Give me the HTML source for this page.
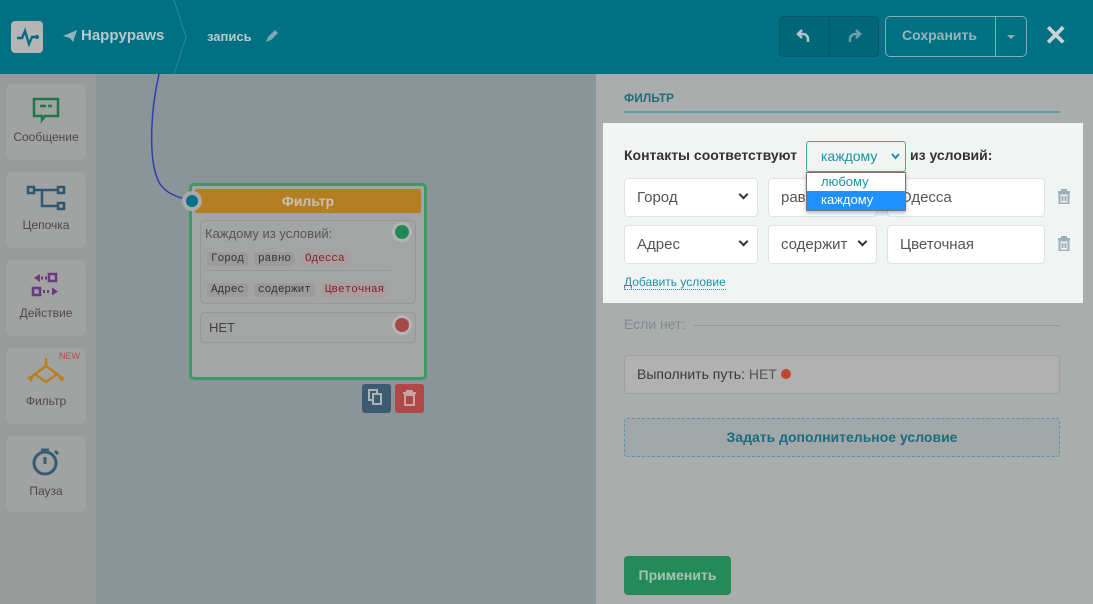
<!DOCTYPE html>
<html><head><meta charset="utf-8"><style>
*{box-sizing:border-box;margin:0;padding:0}
body{width:1093px;height:604px;overflow:hidden;position:relative;font-family:"Liberation Sans",sans-serif;background:#8b9497}
.a{position:absolute}
.hdr{left:0;top:0;width:1093px;height:74px;background:#007083}
.side{left:0;top:74px;width:96px;height:530px;background:#999b9b}
.card{left:6px;width:80px;background:#a1a2a2;border-radius:6px;text-align:center;font-size:12px;color:#4a4a4a}
.panel{left:596px;top:74px;width:497px;height:530px;background:#abadac}
.box{left:603px;top:123px;width:480px;height:180px;background:#f2f4f4}
.inp{background:#fff;border:1px solid #dde3e3;border-radius:4px;height:39px;font-size:15px;color:#555;padding:10px 12px}
.chev{position:absolute;right:10px;top:12px;width:7px;height:7px;border-right:2px solid #333;border-bottom:2px solid #333;transform:rotate(45deg)}
.tag{display:inline-block;background:#9b9b9b;border-radius:3px;padding:1px 4px;font-family:"Liberation Mono",monospace;font-size:11px;color:#333;margin-right:6px}
</style></head><body>
<div class="a hdr"></div>
<div class="a" style="left:11px;top:21px;width:32px;height:32px;background:#b5b5b5;border-radius:4px"></div>
<svg class="a" style="left:11px;top:21px" width="32" height="32"><path d="M6 17h5l3-7 4 13 3-7h4" stroke="#006f84" stroke-width="2.4" fill="none"/><circle cx="26" cy="16" r="2" fill="#006f84"/></svg>
<svg class="a" style="left:63px;top:30px" width="14" height="12"><path d="M0 6L14 0 10 12 7 8z" fill="#8fb6bd"/></svg>
<div class="a" style="left:81px;top:27px;color:#b8c9cc;font-weight:bold;font-size:15px">Happypaws</div>
<svg class="a" style="left:170px;top:0" width="20" height="74"><path d="M4 0L16 37 4 74" stroke="#2d8b9b" fill="none"/></svg>
<div class="a" style="left:207px;top:29px;color:#b8c9cc;font-weight:bold;font-size:13px">запись</div>
<svg class="a" style="left:264px;top:30px" width="14" height="14"><path d="M2 12l2-5 7-7 3 3-7 7z" fill="#7fa9b1"/></svg>
<div class="a" style="left:779px;top:16px;width:100px;height:41px;border:1px solid #00596a;border-radius:5px;background:#006678"></div>
<div class="a" style="left:829px;top:17px;width:1px;height:39px;background:#00596a"></div>
<svg class="a" style="left:796px;top:28px" width="16" height="16"><path d="M6 2L2 6l4 4" stroke="#b5c5c8" stroke-width="2.5" fill="none"/><path d="M2 6h5a5 5 0 0 1 5 5v3" stroke="#b5c5c8" stroke-width="2.5" fill="none"/></svg>
<svg class="a" style="left:846px;top:28px" width="16" height="16"><path d="M10 2l4 4-4 4" stroke="#6f9fa8" stroke-width="2.5" fill="none"/><path d="M14 6H9a5 5 0 0 0-5 5v3" stroke="#6f9fa8" stroke-width="2.5" fill="none"/></svg>
<div class="a" style="left:885px;top:16px;width:142px;height:41px;border:1px solid #86aeb5;border-radius:5px"></div>
<div class="a" style="left:995px;top:17px;width:1px;height:39px;background:#86aeb5"></div>
<div class="a" style="left:902px;top:27px;color:#9ab5ba;font-size:14px;font-weight:bold">Сохранить</div>
<div class="a" style="left:1007px;top:35px;border:4px solid transparent;border-top-color:#8fb0b6"></div>
<div class="a" style="left:1044px;top:19px;color:#c8d3d5;font-size:28px;font-weight:bold">✕</div>

<div class="a side"></div>
<div class="a card" style="top:84px;height:76px"><svg style="margin-top:12px" width="30" height="28"><path d="M3 3h24v17H14l-3 4v-4H3z" stroke="#1d7a48" stroke-width="2.5" fill="none"/><path d="M9 10h6M17 10h4" stroke="#1d7a48" stroke-width="2.5"/></svg><div style="margin-top:3px">Сообщение</div></div>
<div class="a card" style="top:172px;height:76px"><svg style="margin-top:12px" width="40" height="28"><rect x="2" y="3" width="6" height="6" stroke="#2f5770" stroke-width="2.5" fill="none"/><rect x="32" y="3" width="6" height="6" stroke="#2f5770" stroke-width="2.5" fill="none"/><rect x="32" y="19" width="6" height="6" stroke="#2f5770" stroke-width="2.5" fill="none"/><path d="M8 6h24M16 6v16h16" stroke="#2f5770" stroke-width="2.5" fill="none"/></svg><div style="margin-top:3px">Цепочка</div></div>
<div class="a card" style="top:260px;height:76px"><svg style="margin-top:12px" width="30" height="28"><path d="M3 6l6-4v8z" fill="#6a3a80"/><path d="M10 6h2M14 6h2" stroke="#6a3a80" stroke-width="3"/><rect x="18" y="2" width="7" height="7" stroke="#6a3a80" stroke-width="2.5" fill="none"/><rect x="2" y="16" width="7" height="7" stroke="#6a3a80" stroke-width="2.5" fill="none"/><path d="M12 19.5h2M16 19.5h2" stroke="#6a3a80" stroke-width="3"/><path d="M21 15.5l6 4-6 4z" fill="#6a3a80"/></svg><div style="margin-top:3px">Действие</div></div>
<div class="a card" style="top:348px;height:76px"><div style="position:absolute;right:6px;top:3px;color:#b34a4a;font-size:9px">NEW</div><svg style="margin-top:8px" width="40" height="32"><path d="M20 2v8L9 18l11 8 11-8-11-8M9 18l-5 4M31 18l5 4" stroke="#b9801f" stroke-width="2.5" fill="none"/><path d="M1 21h7l-3 5zM32 21h7l-3 5z" fill="#b9801f"/></svg><div style="margin-top:3px">Фильтр</div></div>
<div class="a card" style="top:436px;height:76px"><svg style="margin-top:10px" width="30" height="32"><circle cx="14" cy="17" r="11" stroke="#355c70" stroke-width="3" fill="none"/><path d="M14 11v7M10 4h8M24 5l3 3" stroke="#355c70" stroke-width="3"/></svg><div style="margin-top:3px">Пауза</div></div>

<svg class="a" style="left:140px;top:74px" width="60" height="130"><path d="M19 0C10 40 8 90 20 110Q28 122 50 126" stroke="#2b3fb5" stroke-width="1.5" fill="none"/></svg>
<div class="a" style="left:189px;top:183px;width:238px;height:197px;border:3px solid #3d9865;border-radius:5px;background:#a3a5a5"></div>
<div class="a" style="left:195px;top:189px;width:226px;height:24px;background:#b47e23;border-radius:2px;color:#c8c1b3;font-weight:bold;font-size:14px;text-align:center;line-height:24px">Фильтр</div>
<div class="a" style="left:182px;top:191px;width:20px;height:20px;border-radius:50%;background:#aaa;"></div>
<div class="a" style="left:186px;top:195px;width:12px;height:12px;border-radius:50%;background:#00708a"></div>
<div class="a" style="left:200px;top:220px;width:216px;height:84px;border:1px solid #969898;border-radius:5px"></div>
<div class="a" style="left:205px;top:226px;font-size:13px;color:#555">Каждому из условий:</div>
<div class="a" style="left:395px;top:225px;width:14px;height:14px;border-radius:50%;background:#1f8a52;box-shadow:0 0 0 3px #b5b5b5"></div>
<div class="a" style="left:207px;top:248px"><span class="tag">Город</span><span class="tag">равно</span><span class="tag" style="background:#a89ea0;color:#8b1c2d">Одесса</span></div>
<div class="a" style="left:205px;top:270px;width:185px;border-top:1px solid #979999"></div>
<div class="a" style="left:207px;top:279px"><span class="tag">Адрес</span><span class="tag">содержит</span><span class="tag" style="background:#a89ea0;color:#8b1c2d">Цветочная</span></div>
<div class="a" style="left:200px;top:312px;width:216px;height:31px;border:1px solid #969898;border-radius:5px;font-size:13px;color:#444;padding:7px 8px">НЕТ</div>
<div class="a" style="left:395px;top:318px;width:14px;height:14px;border-radius:50%;background:#a84848;box-shadow:0 0 0 3px #b5b5b5"></div>
<div class="a" style="left:362px;top:384px;width:29px;height:29px;background:#3c5b70;border-radius:3px"></div>
<div class="a" style="left:368px;top:389px;width:10px;height:12px;border:2px solid #a8b3ba"></div>
<div class="a" style="left:372px;top:393px;width:10px;height:12px;border:2px solid #a8b3ba;background:#3c5b70"></div>
<div class="a" style="left:395px;top:384px;width:29px;height:29px;background:#b04848;border-radius:3px"></div>
<svg class="a" style="left:402px;top:390px" width="15" height="16"><path d="M1 3h13M5 3V1h5v2M3 5h9v10H3z" stroke="#c8a5a5" stroke-width="2" fill="none"/></svg>

<div class="a panel"></div>
<div class="a" style="left:624px;top:91px;font-size:12px;font-weight:bold;color:#1f6f7d">ФИЛЬТР</div>
<div class="a" style="left:624px;top:111px;width:436px;height:2px;background:#5a9ea5"></div>
<div class="a box"></div>
<div class="a" style="left:624px;top:147px;font-size:14px;font-weight:bold;color:#333">Контакты соответствуют</div>
<div class="a" style="left:806px;top:141px;width:100px;height:31px;border:1px solid #3bb47c;border-radius:3px;background:#f2f4f4;color:#1e8fa6;font-size:14px;padding:6px 14px">каждому<svg style="position:absolute;right:5px;top:11px" width="9" height="7"><path d="M1 1l3.5 4L8 1" stroke="#1e8fa6" stroke-width="2" fill="none"/></svg></div>
<div class="a" style="left:910px;top:147px;font-size:14px;font-weight:bold;color:#333">из условий:</div>
<div class="a inp" style="left:624px;top:178px;width:134px">Город<span class="chev"></span></div>
<div class="a inp" style="left:768px;top:178px;width:109px">равно</div>
<div class="a inp" style="left:887px;top:178px;width:158px">Одесса</div>
<div class="a inp" style="left:624px;top:225px;width:134px">Адрес<span class="chev"></span></div>
<div class="a inp" style="left:768px;top:225px;width:109px;overflow:hidden;white-space:nowrap;padding-right:28px">содержит<span class="chev" style="background:#fff"></span></div>
<div class="a inp" style="left:887px;top:225px;width:158px">Цветочная</div>
<svg class="a" style="left:1057px;top:189px" width="14" height="15"><path d="M1 3h12M5 3V1h4v2M2.5 4.5h9v10h-9zM5.5 7v5M8.5 7v5" stroke="#9ab0bd" stroke-width="2" fill="none"/></svg>
<svg class="a" style="left:1057px;top:236px" width="14" height="15"><path d="M1 3h12M5 3V1h4v2M2.5 4.5h9v10h-9zM5.5 7v5M8.5 7v5" stroke="#9ab0bd" stroke-width="2" fill="none"/></svg>
<div class="a" style="left:806px;top:172px;width:100px;height:39px;background:#fff;border:1px solid #777;box-shadow:0 2px 4px rgba(0,0,0,.3);font-size:13px"><div style="padding:1px 14px;color:#1e8fa6;height:18px">любому</div><div style="padding:1px 14px;background:#1e90ff;color:#fff;height:19px">каждому</div></div>
<div class="a" style="left:624px;top:275px;font-size:12px;color:#1e8fa6;border-bottom:1px dotted #1e8fa6">Добавить условие</div>
<div class="a" style="left:624px;top:316px;font-size:14px;color:#7d8a90">Если нет:</div>
<div class="a" style="left:694px;top:325px;width:366px;border-top:1px solid #8e989c"></div>
<div class="a" style="left:624px;top:355px;width:436px;height:39px;border:1px solid #9da0a0;border-radius:4px;background:#b1b1b1;font-size:14px;color:#3a3a3a;padding:10px 12px">Выполнить путь: <span style="color:#555">НЕТ</span> <span style="display:inline-block;width:10px;height:10px;border-radius:50%;background:#c0452e"></span></div>
<div class="a" style="left:624px;top:418px;width:436px;height:39px;border:1px dashed #4e9bae;border-radius:3px;background:#a2a8aa;text-align:center;line-height:37px;font-size:14px;font-weight:bold;color:#1b6b7c">Задать дополнительное условие</div>
<div class="a" style="left:624px;top:556px;width:107px;height:39px;background:#248b58;border-radius:4px;text-align:center;line-height:39px;font-size:14px;font-weight:bold;color:#a9c2b6">Применить</div>
</body></html>
